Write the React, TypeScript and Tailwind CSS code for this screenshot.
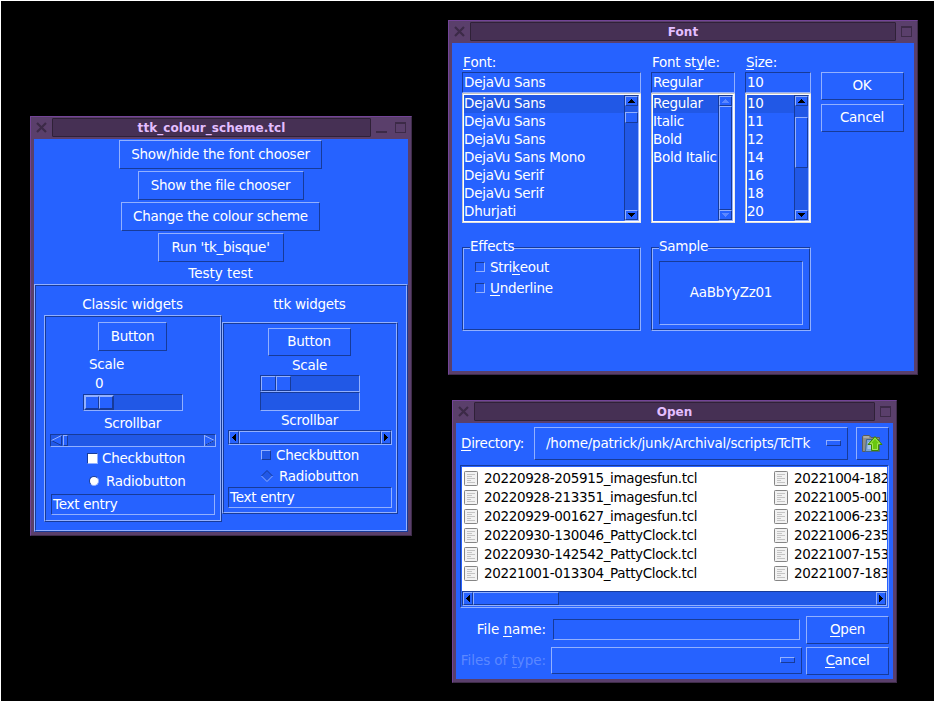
import React from "react";

const RAISED = "border border-t-[#92b0ff] border-l-[#92b0ff] border-r-[#173b99] border-b-[#173b99]";
const SUNKEN = "border border-t-[#173b99] border-l-[#173b99] border-r-[#92b0ff] border-b-[#92b0ff]";

type BoxProps = { className?: string; children?: React.ReactNode };

const Raised = ({ className = "", children }: BoxProps) => (
  <div className={`shrink-0 ${RAISED} ${className}`}>{children}</div>
);
const Sunken = ({ className = "", children }: BoxProps) => (
  <div className={`shrink-0 ${SUNKEN} ${className}`}>{children}</div>
);
const Button = ({ className = "", children }: BoxProps) => (
  <button className={`flex shrink-0 items-center justify-center pb-[2px] ${RAISED} ${className}`}>
    <span className="block leading-4">{children}</span>
  </button>
);
const Ridge = ({ className = "", children }: BoxProps) => (
  <div className={`flex shrink-0 ${RAISED} ${className}`}>
    <div className={`flex w-full flex-col ${SUNKEN}`}>{children}</div>
  </div>
);
const U = ({ children }: { children: string }) => (
  <span className="inline-block h-4 border-b border-white leading-4">{children}</span>
);

const CloseIcon = () => (
  <svg width="11" height="11" viewBox="0 0 11 11" className="shrink-0">
    <path d="M1 1L10 10M10 1L1 10" stroke="#3c2a47" strokeWidth="2.2" />
  </svg>
);

type WindowProps = { title: string; frame: string; minimise?: boolean; children: React.ReactNode };

const Window = ({ title, frame, minimise, children }: WindowProps) => (
  <section
    className={`absolute flex flex-col border border-t-[#734497] border-l-[#734497] border-r-[#3f2c4a] border-b-[#3f2c4a] bg-[#5a3f6b] px-[3px] pb-[3px] ${frame}`}
  >
    <header className="flex h-[22px] shrink-0 items-start pt-px">
      <div className="mt-1 ml-[2px] flex">
        <CloseIcon />
      </div>
      <div className="ml-[5px] h-[19px] grow rounded-[1px] border border-[#2f2137] bg-[#463054] text-center font-['DejaVu_Sans',sans-serif] text-[12px] leading-[18px] font-bold tracking-[0.05px] text-[#e3beff]">
        {title}
      </div>
      {minimise && <div className="mt-[13px] ml-[5px] h-[2px] w-[11px] bg-[#3c2a47]" />}
      <div
        className={`mt-1 mr-[2px] h-[11px] w-[11px] border border-t-2 border-[#3c2a47] ${minimise ? "ml-2" : "ml-[5px]"}`}
      />
    </header>
    <div className="flex min-h-0 grow flex-col overflow-hidden bg-[#2662ff]">{children}</div>
  </section>
);

type ArrowDir = "up" | "down" | "left" | "right";
const ARROWS: Record<ArrowDir, string> = {
  up: "M3 0h1v1h1v1h1v1h1v1H0V3h1V2h1V1h1z",
  down: "M0 0h7v1H6v1H5v1H4v1H3V3H2V2H1V1H0z",
  left: "M4 0v7H3V6H2V5H1V4H0V3h1V2h1V1h1V0z",
  right: "M0 0h1v1h1v1h1v1h1v1H3v1H2v1H1v1H0z",
};
const Arrow = ({ dir, dim }: { dir: ArrowDir; dim?: boolean }) => {
  const vertical = dir === "up" || dir === "down";
  return (
    <svg width={vertical ? 7 : 4} height={vertical ? 4 : 7} shapeRendering="crispEdges">
      <path d={ARROWS[dir]} fill={dim ? "#5c88ff" : "#000"} />
    </svg>
  );
};

const VScroll = ({ gap, thumb, dim }: { gap: string; thumb: string; dim?: boolean }) => (
  <Sunken className="flex w-[15px] flex-col bg-[#2158e6]">
    <Raised className="flex h-[10px] items-center justify-center bg-[#2662ff]">
      <Arrow dir="up" dim={dim} />
    </Raised>
    <div className={gap} />
    <Raised className={`bg-[#2662ff] ${thumb}`} />
    <div className="grow" />
    <Raised className="flex h-[10px] items-center justify-center bg-[#2662ff]">
      <Arrow dir="down" dim={dim} />
    </Raised>
  </Sunken>
);

const HArrowButton = ({ dir }: { dir: ArrowDir }) => (
  <Raised className="flex w-[10px] items-center justify-center bg-[#2662ff]">
    <Arrow dir={dir} />
  </Raised>
);

const MainWindow = () => (
  <Window title="ttk_colour_scheme.tcl" minimise frame="top-[116px] left-[30px] h-[420px] w-[382px]">
    <div className="flex flex-col items-center gap-[2px] pt-px pr-px">
      <Button className="h-[29px] w-[203px]">Show/hide the font chooser</Button>
      <Button className="h-[29px] w-[166px]">Show the file chooser</Button>
      <Button className="h-[29px] w-[199px]">Change the colour scheme</Button>
      <Button className="h-[29px] w-[126px]">Run 'tk_bisque'</Button>
      <div className="h-5 leading-[18px] tracking-[-0.05px]">Testy test</div>
    </div>
    <Ridge className="h-[248px]">
      <div className="flex pl-2">
        <div className="w-[178px]">
          <div className="h-[29px] pt-[10px] pr-px text-center leading-4 tracking-[-0.2px]">Classic widgets</div>
          <Ridge className="h-[207px]">
            <div className="flex flex-col pt-[5px]">
              <Button className="ml-[52px] h-[29px] w-[69px]">Button</Button>
              <div className="mt-[5px] ml-[43px] leading-4">Scale</div>
              <div className="mt-[3px] ml-[49px] leading-4">0</div>
              <Sunken className="mt-[3px] ml-[37px] h-[17px] w-[100px] bg-[#2158e6]">
                <Raised className="flex h-[15px] w-[30px] bg-[#2662ff]">
                  <Raised className="w-[14px]" />
                  <Raised className="w-[14px]" />
                </Raised>
              </Sunken>
              <div className="mt-1 pr-px text-center leading-4">Scrollbar</div>
              <Sunken className="mt-[3px] ml-1 flex h-[13px] w-[166px] bg-[#2158e6]">
                <svg width="12" height="11" className="shrink-0">
                  <path d="M0.5 5.5L10.5 10.5V0.5" fill="#2662ff" stroke="#173b99" />
                  <path d="M10.5 0.5L0.5 5.5" stroke="#92b0ff" />
                </svg>
                <Raised className="w-[5px] bg-[#2662ff]" />
                <div className="grow" />
                <svg width="11" height="11" className="shrink-0">
                  <path d="M0.5 10.5L10.5 5.5L0.5 0.5" fill="#2662ff" stroke="#92b0ff" />
                  <path d="M0.5 10.5L10.5 5.5" stroke="#173b99" />
                  <path d="M0.5 11V0" stroke="#92b0ff" />
                </svg>
              </Sunken>
              <div className="mt-[3px] ml-[41px] flex h-4 items-center leading-4">
                <Sunken className="mr-1 h-[11px] w-[11px] bg-white" />
                Checkbutton
              </div>
              <div className="mt-[7px] ml-[43px] flex h-4 items-center leading-4">
                <Sunken className="mr-[7px] h-[10px] w-[10px] rounded-full bg-white" />
                Radiobutton
              </div>
              <Sunken className="mt-[5px] ml-[5px] h-[21px] w-[164px] pl-px leading-[18px]">Text entry</Sunken>
            </div>
          </Ridge>
        </div>
        <div className="w-[176px]">
          <div className="h-9 pt-[10px] pr-px text-center leading-4">ttk widgets</div>
          <Ridge className="h-[192px]">
            <div className="flex flex-col pt-1">
              <Button className="ml-11 h-7 w-[83px] pr-px">Button</Button>
              <div className="mt-px pr-px text-center leading-4">Scale</div>
              <Sunken className="mt-[2px] ml-9 h-[17px] w-[100px] bg-[#2158e6]">
                <div className="flex h-[15px] bg-transparent">
                  <Raised className="w-[15px] bg-[#2662ff]" />
                  <Raised className="w-[15px] bg-[#2662ff]" />
                </div>
              </Sunken>
              <Sunken className="ml-9 h-[19px] w-[100px] bg-[#2158e6]" />
              <div className="mt-px pr-px text-center leading-4">Scrollbar</div>
              <Sunken className="mt-[2px] ml-1 flex h-[15px] w-[164px]">
                <HArrowButton dir="left" />
                <Raised className="w-[142px]" />
                <HArrowButton dir="right" />
              </Sunken>
              <div className="mt-[2px] ml-[37px] flex h-4 items-center leading-4">
                <Raised className="mr-[5px] h-[10px] w-[10px] bg-[#2158e6]" />
                Checkbutton
              </div>
              <div className="mt-[5px] ml-[37px] flex h-4 items-center leading-4">
                <svg width="12" height="12" className="mr-[6px]">
                  <path d="M0.5 6L6 0.5L11.5 6L6 11.5Z" fill="#2158e6" />
                  <path d="M0.5 6L6 0.5L11.5 6" fill="none" stroke="#173b99" />
                  <path d="M0.5 6L6 11.5L11.5 6" fill="none" stroke="#92b0ff" />
                </svg>
                Radiobutton
              </div>
              <Sunken className="mt-[3px] ml-1 h-[21px] w-[164px] pl-px leading-[18px]">Text entry</Sunken>
            </div>
          </Ridge>
        </div>
      </div>
    </Ridge>
  </Window>
);

type PickerProps = {
  label: React.ReactNode;
  value: string;
  items: string[];
  width: string;
  scroll: React.ReactNode;
};

const Picker = ({ label, value, items, width, scroll }: PickerProps) => (
  <div className={`shrink-0 ${width}`}>
    <div className="h-[18px] pl-px leading-4">{label}</div>
    <Sunken className="h-[21px] pl-px leading-[18px]">{value}</Sunken>
    <div className="h-[130px] border border-[#c3c3c3] border-r-[#ececec] border-b-[#e0e0e0]">
      <div className="flex h-full border border-white">
        <ul className="min-w-0 grow overflow-hidden whitespace-nowrap">
          {items.map((item, i) => (
            <li key={i} className={`h-[18px] leading-4 ${i === 0 ? "bg-[#2158e6]" : ""}`}>
              {item}
            </li>
          ))}
        </ul>
        {scroll}
      </div>
    </div>
  </div>
);

const Group = ({ title, width, children }: { title: string; width: string; children: React.ReactNode }) => (
  <div className={`relative h-[84px] shrink-0 ${SUNKEN} ${width}`}>
    <div className={`h-full ${RAISED}`}>{children}</div>
    <span className="absolute -top-[10px] left-[7px] h-4 bg-[#2662ff] leading-4">{title}</span>
  </div>
);

const FontWindow = () => (
  <Window title="Font" frame="top-[20px] left-[448px] h-[355px] w-[470px]">
    <div className="flex gap-[10px] pt-[11px] pl-[10px]">
      <Picker
        label={<><U>F</U>ont:</>}
        value="DejaVu Sans"
        width="w-[179px]"
        items={["DejaVu Sans", "DejaVu Sans", "DejaVu Sans", "DejaVu Sans Mono", "DejaVu Serif", "DejaVu Serif", "Dhurjati"]}
        scroll={<VScroll gap="h-[6px]" thumb="h-[11px]" />}
      />
      <Picker
        label={<>Font st<U>y</U>le:</>}
        value="Regular"
        width="w-[84px]"
        items={["Regular", "Italic", "Bold", "Bold Italic"]}
        scroll={<VScroll gap="h-0" thumb="h-[104px]" dim />}
      />
      <Picker
        label={<><U>S</U>ize:</>}
        value="10"
        width="w-[66px]"
        items={["10", "11", "12", "14", "16", "18", "20"]}
        scroll={<VScroll gap="h-[11px]" thumb="h-[51px]" />}
      />
      <div className="flex flex-col gap-1 pt-[18px]">
        <Button className="h-7 w-[83px] pr-px">OK</Button>
        <Button className="h-7 w-[83px] pr-px">Cancel</Button>
      </div>
    </div>
    <div className="mt-6 flex gap-[10px] pl-[10px]">
      <Group title="Effects" width="w-[179px]">
        <div className="flex flex-col gap-[5px] pt-[10px] pl-[11px]">
          <div className="flex h-4 items-center leading-4">
            <Sunken className="mr-[5px] h-[10px] w-[10px]" />
            <span>Stri<U>k</U>eout</span>
          </div>
          <div className="flex h-4 items-center leading-4">
            <Sunken className="mr-[5px] h-[10px] w-[10px]" />
            <span><U>U</U>nderline</span>
          </div>
        </div>
      </Group>
      <Group title="Sample" width="w-[160px]">
        <Sunken className="mt-3 ml-[6px] flex h-16 w-36 items-center justify-center pb-[2px] leading-4">AaBbYyZz01</Sunken>
      </Group>
    </div>
  </Window>
);

const FileIcon = () => (
  <svg width="14" height="15" className="shrink-0">
    <rect x="0.5" y="0.5" width="13" height="14" rx="0.8" fill="#f2f2f2" stroke="#858585" />
    <path d="M3 3.5h8M3 5.5h5M3 7.5h8M3 9.5h4M3 11.5h8" stroke="#c4c4c4" />
  </svg>
);

const FolderUpIcon = () => (
  <svg width="21" height="20" viewBox="0 0 21 20">
    <path d="M0.5 17.5V2.5L1.5 1.5H7.5L9 3.5H17.5V17.5Z" fill="#8d8f8b" stroke="#5a5d59" />
    <path d="M1.5 3H7" stroke="#c6c8c4" />
    <path d="M3.5 17.5L4.5 5.5H17.5V17.5Z" fill="#7ba7d8" stroke="#3f6590" />
    <path d="M6 8H13V15H5.5Z" fill="#a9c8e8" />
    <path d="M13 2.5L20 10.5H16.5V16.5H9.5V10.5H6Z" fill="#69c70f" stroke="#3d8503" />
    <path d="M13 4.2L18 9.7H15.6V15.5H10.5V9.7H8.2Z" fill="none" stroke="#b5ee6b" strokeWidth="0.8" />
  </svg>
);

const FILES = [
  ["20220928-205915_imagesfun.tcl", "20221004-182"],
  ["20220928-213351_imagesfun.tcl", "20221005-001"],
  ["20220929-001627_imagesfun.tcl", "20221006-233"],
  ["20220930-130046_PattyClock.tcl", "20221006-235"],
  ["20220930-142542_PattyClock.tcl", "20221007-153"],
  ["20221001-013304_PattyClock.tcl", "20221007-183"],
];

const OpenWindow = () => (
  <Window title="Open" frame="top-[400px] left-[452px] h-[283px] w-[445px]">
    <div className="mt-1 flex h-[33px] items-center pl-[5px]">
      <div className="w-[73px] pb-px leading-4"><U>D</U>irectory:</div>
      <Raised className="flex h-[33px] w-[314px] items-center justify-between pr-[6px] pl-[11px]">
        <span className="pb-px leading-4 tracking-[-0.22px]">/home/patrick/junk/Archival/scripts/TclTk</span>
        <Raised className="mb-px h-[6px] w-[15px]" />
      </Raised>
      <Raised className="ml-2 flex h-[33px] w-[33px] items-center justify-center">
        <FolderUpIcon />
      </Raised>
    </div>
    <Sunken className="mt-[5px] ml-1 h-[143px] w-[429px]">
      <div className="h-full border border-[#2662ff]">
        <div className="flex h-[124px] flex-col overflow-hidden bg-white pt-[2px] text-black">
          {FILES.map(([a, b]) => (
            <div key={a} className="flex h-[19px] shrink-0 items-center pl-[2px] leading-[18px] tracking-[-0.36px] whitespace-nowrap">
              <FileIcon />
              <span className="ml-[6px] w-[290px] shrink-0 pb-px">{a}</span>
              <FileIcon />
              <span className="ml-[6px] pb-px">{b}</span>
            </div>
          ))}
        </div>
        <Sunken className="flex h-[15px] bg-[#2158e6]">
          <HArrowButton dir="left" />
          <Raised className="w-[86px] bg-[#2662ff]" />
          <div className="grow" />
          <HArrowButton dir="right" />
        </Sunken>
      </div>
    </Sunken>
    <div className="mt-2 flex h-7 items-center">
      <div className="w-[90px] pb-[2px] text-right leading-4 tracking-[-0.05px]">File <U>n</U>ame:</div>
      <Sunken className="mb-px ml-[7px] h-[21px] w-[247px]" />
      <Button className="ml-[6px] h-7 w-[83px]"><U>O</U>pen</Button>
    </div>
    <div className="mt-[3px] flex h-7 items-start">
      <div className="mt-[5px] w-[90px] text-right leading-4 tracking-[-0.05px] text-[#5c88ff]">
        Files of <span className="inline-block h-4 border-b border-[#5c88ff] leading-4">t</span>ype:
      </div>
      <Raised className="ml-[5px] flex h-[27px] w-[251px] items-center justify-end pr-[6px] pb-px">
        <Raised className="h-[6px] w-[15px]" />
      </Raised>
      <Button className="ml-1 h-7 w-[83px]"><U>C</U>ancel</Button>
    </div>
  </Window>
);

export default function App() {
  return (
    <main className="relative h-[701px] w-[934px] overflow-hidden border-t border-l border-white bg-black font-['DejaVu_Sans',sans-serif] text-[13.5px] tracking-[-0.27px] text-white">
      <div className="absolute -top-px -left-px h-[701px] w-[934px]">
        <MainWindow />
        <FontWindow />
        <OpenWindow />
      </div>
    </main>
  );
}
